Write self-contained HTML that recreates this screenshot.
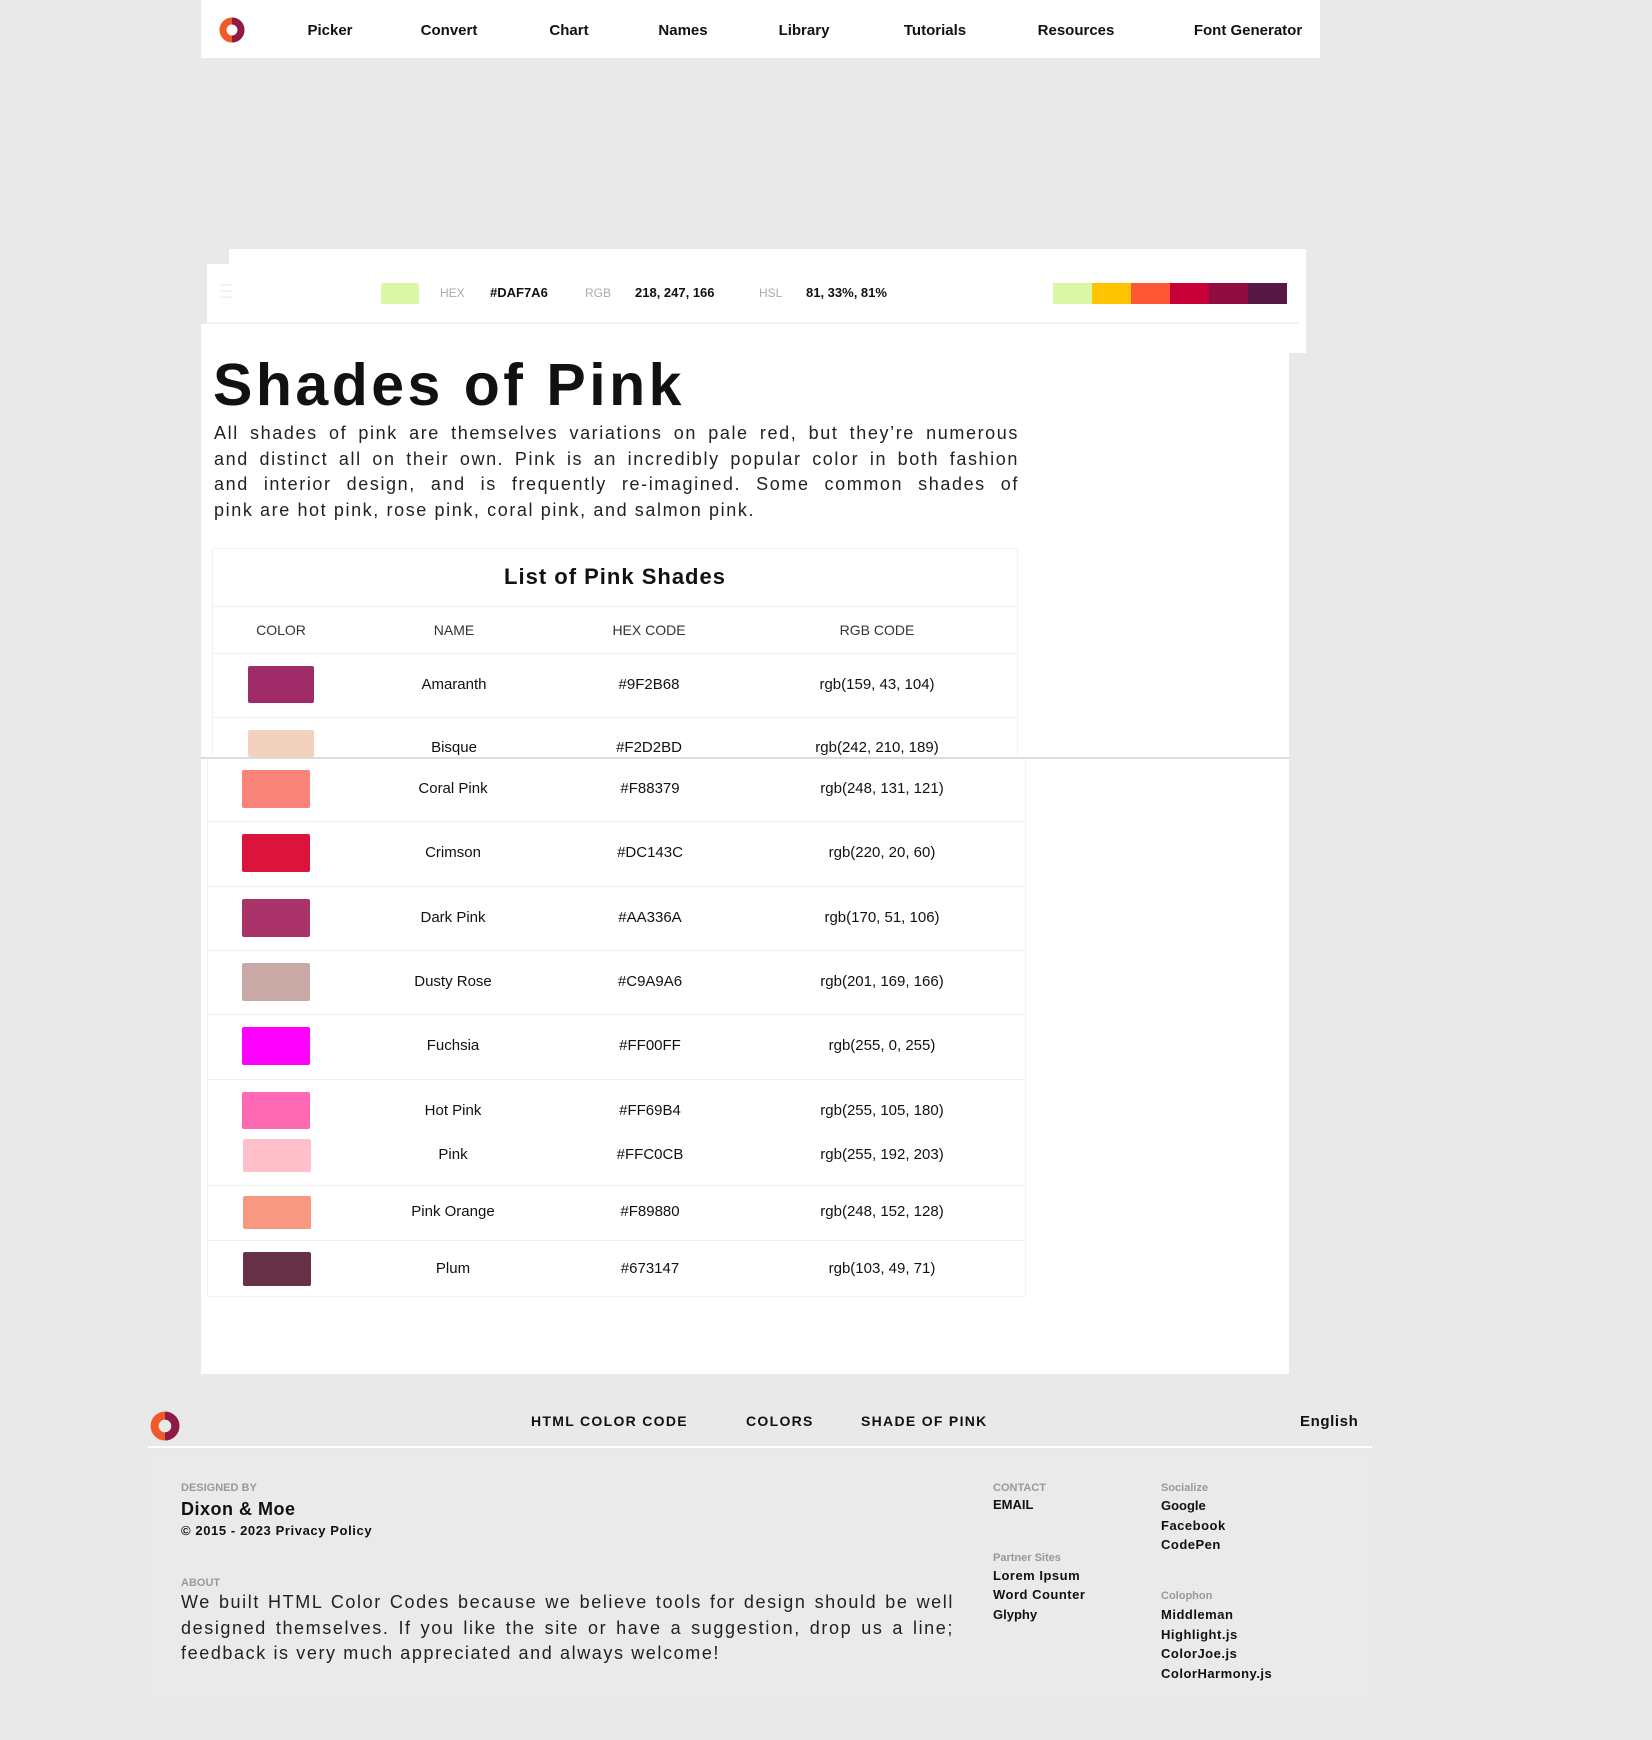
<!DOCTYPE html>
<html><head><meta charset="utf-8"><style>
*{margin:0;padding:0;box-sizing:border-box}
body{width:1652px;height:1740px;background:#e9e9e9;font-family:"Liberation Sans",sans-serif;color:#111;position:relative;overflow:hidden}
.a{position:absolute}
.c{position:absolute;width:240px;text-align:center;font-size:15px;line-height:20px}
.nav{font-size:15px;font-weight:bold;line-height:20px;position:absolute;top:21px;width:160px;text-align:center}
.sw{position:absolute;border-radius:2px}
.hr{position:absolute;height:1px;background:#f0f0f0}
.ft{position:absolute;font-size:13px;font-weight:bold;line-height:20px}
.lbl{position:absolute;font-size:11px;color:#999;font-weight:bold;line-height:14px}
.j{text-align:justify;text-align-last:justify;white-space:nowrap}
.p{font-size:18px;letter-spacing:1.6px}
</style></head><body>
<div class="a" style="left:201px;top:0;width:1119px;height:58px;background:#fff"></div>
<svg class="a" style="left:219px;top:17px" width="26" height="26" viewBox="0 0 26 26"><circle cx="13" cy="13" r="9" fill="none" stroke="#f05a28" stroke-width="7"/><path d="M13 4 A9 9 0 0 1 13 22" fill="none" stroke="#8e1a46" stroke-width="7"/></svg>
<div class="nav" style="left:250px">Picker</div>
<div class="nav" style="left:369px">Convert</div>
<div class="nav" style="left:489px">Chart</div>
<div class="nav" style="left:603px">Names</div>
<div class="nav" style="left:724px">Library</div>
<div class="nav" style="left:855px">Tutorials</div>
<div class="nav" style="left:996px">Resources</div>
<div class="nav" style="left:1168px">Font Generator</div>

<div class="a" style="left:229px;top:249px;width:1077px;height:104px;background:#fff"></div>
<div class="a" style="left:201px;top:324px;width:1088px;height:1050px;background:#fff"></div>
<div class="a" style="left:207px;top:264px;width:1091px;height:60px;background:#fff;border-bottom:2px solid #f2f0f1"></div>
<div class="a" style="left:221px;top:282px;width:24px;height:18px;color:#ddd;font-size:11px;line-height:6px">—<br>—<br>—</div>
<div class="sw" style="left:381px;top:283px;width:38px;height:21px;background:#daf7a6"></div>
<div class="a" style="left:440px;top:286px;font-size:12px;color:#aaa;line-height:14px">HEX</div>
<div class="a" style="left:490px;top:285px;font-size:13px;font-weight:bold;line-height:16px">#DAF7A6</div>
<div class="a" style="left:585px;top:286px;font-size:12px;color:#aaa;line-height:14px">RGB</div>
<div class="a" style="left:635px;top:285px;font-size:13px;font-weight:bold;line-height:16px">218, 247, 166</div>
<div class="a" style="left:759px;top:286px;font-size:12px;color:#aaa;line-height:14px">HSL</div>
<div class="a" style="left:806px;top:285px;font-size:13px;font-weight:bold;line-height:16px">81, 33%, 81%</div>
<div class="a" style="left:1053px;top:283px;width:234px;height:21px;display:flex">
<div style="flex:1;background:#daf7a6"></div><div style="flex:1;background:#ffc300"></div><div style="flex:1;background:#ff5733"></div><div style="flex:1;background:#c70039"></div><div style="flex:1;background:#900c3f"></div><div style="flex:1;background:#581845"></div></div>

<div class="a" style="left:213px;top:353px;font-size:59px;font-weight:bold;line-height:64px;letter-spacing:3.5px">Shades of Pink</div>
<div class="a" style="left:214px;top:421px;width:805px;line-height:25.5px;color:#222" >
<div class="j p">All shades of pink are themselves variations on pale red, but they’re numerous</div>
<div class="j p">and distinct all on their own. Pink is an incredibly popular color in both fashion</div>
<div class="j p">and interior design, and is frequently re-imagined. Some common shades of</div>
<div class="p">pink are hot pink, rose pink, coral pink, and salmon pink.</div>
</div>

<div class="a" style="left:212px;top:548px;width:806px;height:209px;border:1px solid #f2f2f2;border-bottom:none"></div>
<div class="a" style="left:212px;top:563px;width:806px;text-align:center;font-size:22px;font-weight:bold;line-height:28px;letter-spacing:1px">List of Pink Shades</div>
<div class="hr" style="left:212px;top:606px;width:806px"></div>
<div class="c" style="left:161px;top:620px;font-size:14px;color:#333">COLOR</div>
<div class="c" style="left:334px;top:620px;font-size:14px;color:#333">NAME</div>
<div class="c" style="left:529px;top:620px;font-size:14px;color:#333">HEX CODE</div>
<div class="c" style="left:757px;top:620px;font-size:14px;color:#333">RGB CODE</div>
<div class="hr" style="left:212px;top:653px;width:806px"></div>
<div class="sw" style="left:248px;top:666px;width:66px;height:37px;background:#9f2b68"></div>
<div class="c" style="left:334px;top:675px">Amaranth</div><div class="c" style="left:529px;top:675px">#9F2B68</div><div class="c" style="left:757px;top:675px">rgb(159, 43, 104)</div>
<div class="hr" style="left:212px;top:717px;width:806px"></div>
<div class="sw" style="left:248px;top:730px;width:66px;height:27px;background:#f2d2bd"></div>
<div class="c" style="left:334px;top:738px">Bisque</div><div class="c" style="left:529px;top:738px">#F2D2BD</div><div class="c" style="left:757px;top:738px">rgb(242, 210, 189)</div>
<div class="a" style="left:201px;top:757px;width:1088px;height:2px;background:#dcdcdc"></div>

<div class="a" style="left:207px;top:759px;width:819px;height:538px;border:1px solid #f2f2f2;border-top:none"></div>
<div class="sw" style="left:242px;top:770px;width:68px;height:38px;background:#f88379"></div>
<div class="c" style="left:333px;top:779px">Coral Pink</div><div class="c" style="left:530px;top:779px">#F88379</div><div class="c" style="left:762px;top:779px">rgb(248, 131, 121)</div>
<div class="hr" style="left:207px;top:821px;width:819px"></div>
<div class="sw" style="left:242px;top:834px;width:68px;height:38px;background:#dc143c"></div>
<div class="c" style="left:333px;top:843px">Crimson</div><div class="c" style="left:530px;top:843px">#DC143C</div><div class="c" style="left:762px;top:843px">rgb(220, 20, 60)</div>
<div class="hr" style="left:207px;top:886px;width:819px"></div>
<div class="sw" style="left:242px;top:899px;width:68px;height:38px;background:#aa336a"></div>
<div class="c" style="left:333px;top:908px">Dark Pink</div><div class="c" style="left:530px;top:908px">#AA336A</div><div class="c" style="left:762px;top:908px">rgb(170, 51, 106)</div>
<div class="hr" style="left:207px;top:950px;width:819px"></div>
<div class="sw" style="left:242px;top:963px;width:68px;height:38px;background:#c9a9a6"></div>
<div class="c" style="left:333px;top:972px">Dusty Rose</div><div class="c" style="left:530px;top:972px">#C9A9A6</div><div class="c" style="left:762px;top:972px">rgb(201, 169, 166)</div>
<div class="hr" style="left:207px;top:1014px;width:819px"></div>
<div class="sw" style="left:242px;top:1027px;width:68px;height:38px;background:#ff00ff"></div>
<div class="c" style="left:333px;top:1036px">Fuchsia</div><div class="c" style="left:530px;top:1036px">#FF00FF</div><div class="c" style="left:762px;top:1036px">rgb(255, 0, 255)</div>
<div class="hr" style="left:207px;top:1079px;width:819px"></div>
<div class="sw" style="left:242px;top:1092px;width:68px;height:37px;background:#ff69b4"></div>
<div class="c" style="left:333px;top:1101px">Hot Pink</div><div class="c" style="left:530px;top:1101px">#FF69B4</div><div class="c" style="left:762px;top:1101px">rgb(255, 105, 180)</div>
<div class="sw" style="left:243px;top:1139px;width:68px;height:33px;background:#ffc0cb"></div>
<div class="c" style="left:333px;top:1145px">Pink</div><div class="c" style="left:530px;top:1145px">#FFC0CB</div><div class="c" style="left:762px;top:1145px">rgb(255, 192, 203)</div>
<div class="hr" style="left:207px;top:1185px;width:819px"></div>
<div class="sw" style="left:243px;top:1196px;width:68px;height:33px;background:#f89880"></div>
<div class="c" style="left:333px;top:1202px">Pink Orange</div><div class="c" style="left:530px;top:1202px">#F89880</div><div class="c" style="left:762px;top:1202px">rgb(248, 152, 128)</div>
<div class="hr" style="left:207px;top:1240px;width:819px"></div>
<div class="sw" style="left:243px;top:1252px;width:68px;height:34px;background:#673147"></div>
<div class="c" style="left:333px;top:1259px">Plum</div><div class="c" style="left:530px;top:1259px">#673147</div><div class="c" style="left:762px;top:1259px">rgb(103, 49, 71)</div>

<svg class="a" style="left:150px;top:1411px" width="30" height="30" viewBox="0 0 26 26"><circle cx="13" cy="13" r="9" fill="none" stroke="#f05a28" stroke-width="7"/><path d="M13 4 A9 9 0 0 1 13 22" fill="none" stroke="#8e1a46" stroke-width="7"/></svg>
<div class="a" style="left:531px;top:1411px;font-size:14px;font-weight:bold;line-height:20px;letter-spacing:1.3px">HTML COLOR CODE</div>
<div class="a" style="left:746px;top:1411px;font-size:14px;font-weight:bold;line-height:20px;letter-spacing:1.3px">COLORS</div>
<div class="a" style="left:861px;top:1411px;font-size:14px;font-weight:bold;line-height:20px;letter-spacing:1.3px">SHADE OF PINK</div>
<div class="a" style="left:1300px;top:1412px;font-size:15px;font-weight:bold;line-height:20px;letter-spacing:0.6px">English</div>
<div class="a" style="left:148px;top:1446px;width:1224px;height:2px;background:#fff"></div>
<div class="a" style="left:148px;top:1449px;width:1224px;height:254px;background:#ebeaea"></div>

<div class="lbl" style="left:181px;top:1481px">DESIGNED BY</div>
<div class="a" style="left:181px;top:1498px;font-size:18px;font-weight:bold;line-height:22px;letter-spacing:0.5px">Dixon &amp; Moe</div>
<div class="ft" style="left:181px;top:1521px;letter-spacing:0.6px">© 2015 - 2023 Privacy Policy</div>
<div class="lbl" style="left:181px;top:1576px">ABOUT</div>
<div class="a" style="left:181px;top:1590px;width:773px;line-height:25.5px;color:#222">
<div class="j p">We built HTML Color Codes because we believe tools for design should be well</div>
<div class="j p">designed themselves. If you like the site or have a suggestion, drop us a line;</div>
<div class="p">feedback is very much appreciated and always welcome!</div>
</div>

<div class="lbl" style="left:993px;top:1481px">CONTACT</div>
<div class="ft" style="left:993px;top:1495px">EMAIL</div>
<div class="lbl" style="left:993px;top:1551px">Partner Sites</div>
<div class="ft" style="left:993px;top:1566px;letter-spacing:0.5px">Lorem Ipsum</div>
<div class="ft" style="left:993px;top:1585px;letter-spacing:0.5px">Word Counter</div>
<div class="ft" style="left:993px;top:1605px">Glyphy</div>

<div class="lbl" style="left:1161px;top:1481px">Socialize</div>
<div class="ft" style="left:1161px;top:1496px">Google</div>
<div class="ft" style="left:1161px;top:1516px;letter-spacing:0.5px">Facebook</div>
<div class="ft" style="left:1161px;top:1535px;letter-spacing:0.5px">CodePen</div>
<div class="lbl" style="left:1161px;top:1589px">Colophon</div>
<div class="ft" style="left:1161px;top:1605px;letter-spacing:0.5px">Middleman</div>
<div class="ft" style="left:1161px;top:1625px;letter-spacing:0.5px">Highlight.js</div>
<div class="ft" style="left:1161px;top:1644px;letter-spacing:0.5px">ColorJoe.js</div>
<div class="ft" style="left:1161px;top:1664px;letter-spacing:0.5px">ColorHarmony.js</div>
</body></html>
